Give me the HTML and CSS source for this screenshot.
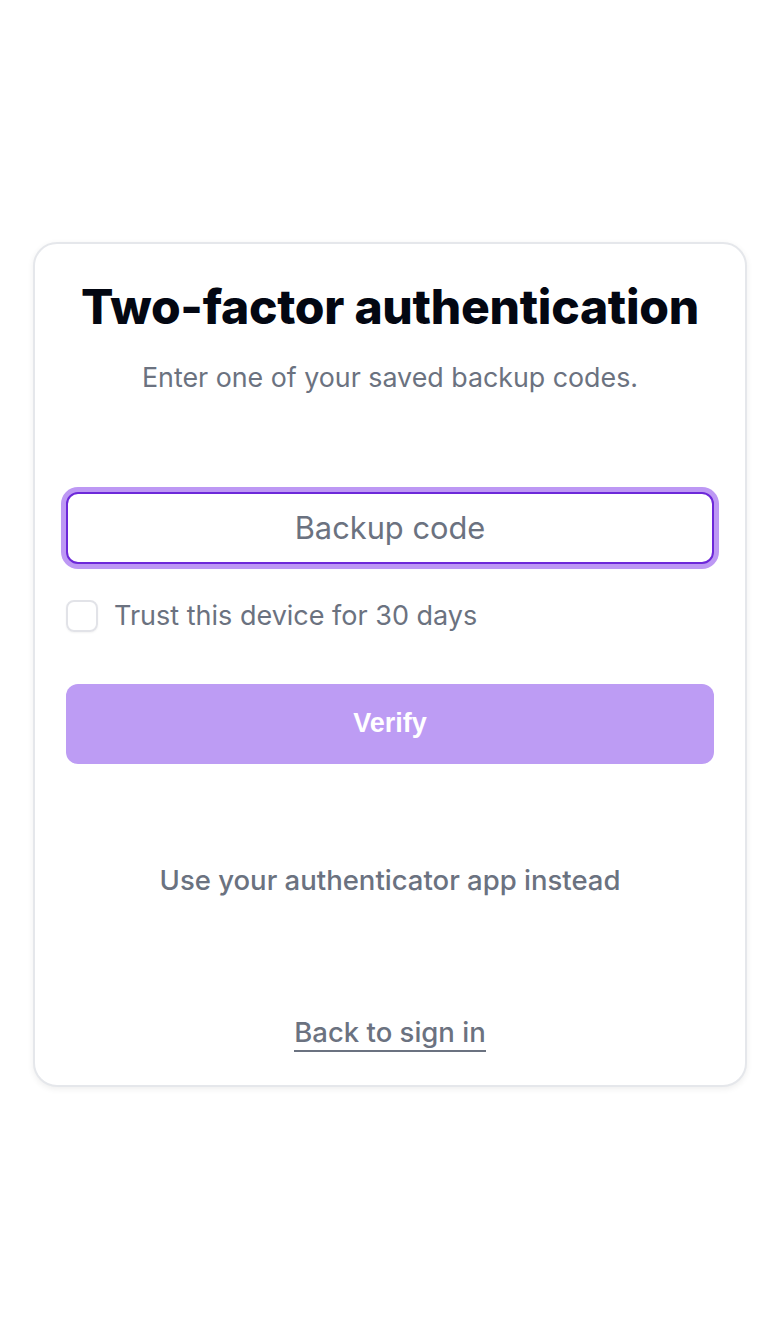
FILE: index.html
```html
<!DOCTYPE html>
<html lang="en">
<head>
<meta charset="utf-8">
<title>Two-factor authentication</title>
<link rel="stylesheet" href="styles.css">
</head>
<body>
<main class="page">
  <section class="card">
    <h1 class="title">Two-factor authentication</h1>
    <p class="subtitle">Enter one of your saved backup codes.</p>
    <form class="form">
      <input class="code-input" type="text" placeholder="Backup code">
      <label class="trust">
        <span class="checkbox"></span>
        <span class="trust-text">Trust this device for 30 days</span>
      </label>
      <button class="verify" type="button">Verify</button>
    </form>
    <p class="alt">Use your authenticator app instead</p>
    <div class="back-wrap"><a class="back" href="#">Back to sign in</a></div>
  </section>
</main>
</body>
</html>
```

FILE: styles.css
```css
* { box-sizing: border-box; }
html, body { margin: 0; padding: 0; background: #ffffff; }
body { font-family: Inter, "Noto Sans", sans-serif; color: #030712; }

.page {
  min-height: 1328px;
  display: flex;
  align-items: center;
  justify-content: center;
  padding: 0 33px;
}

.card {
  width: 714px;
  border: 2px solid #e5e7eb;
  border-radius: 24px;
  box-shadow: 0 2px 6px rgba(0, 0, 0, 0.07);
  padding: 31px;
  display: flex;
  flex-direction: column;
  align-items: stretch;
  background: #fff;
}

.title {
  margin: 0;
  font-size: 48px;
  line-height: 64px;
  font-weight: 800;
  letter-spacing: -0.28px;
  text-align: center;
  color: #030712;
}

.subtitle {
  margin: 20px 0 0;
  font-size: 26.8px;
  line-height: 36px;
  color: #6b7280;
  text-align: center;
}

.form {
  margin-top: 97px;
  display: flex;
  flex-direction: column;
}

.code-input {
  height: 72px;
  width: 100%;
  border: 2px solid #6d28d9;
  border-radius: 12px;
  box-shadow: 0 0 0 5px #bd98f4;
  outline: none;
  font-family: Inter, sans-serif;
  font-size: 30.8px;
  text-align: center;
  color: #111827;
  background: #fff;
}
.code-input::placeholder { color: #6b7280; }

.trust {
  margin-top: 32px;
  display: flex;
  align-items: center;
  gap: 16px;
  height: 40px;
}
.checkbox {
  width: 32px;
  height: 32px;
  border: 2px solid #e2e3e8;
  border-radius: 8px;
  box-shadow: 0 1px 2px rgba(0, 0, 0, 0.05);
  flex: none;
}
.trust-text {
  font-size: 27px;
  line-height: 40px;
  color: #6b7280;
}

.verify {
  margin-top: 48px;
  height: 80px;
  border: none;
  border-radius: 12px;
  background: #bd9cf4;
  color: #ffffff;
  font-family: "Liberation Sans", Arial, sans-serif;
  font-size: 27px;
  font-weight: 700;
}

.alt {
  margin: 96px 0 0;
  text-align: center;
  font-size: 27.5px;
  line-height: 40px;
  font-weight: 500;
  color: #6b7280;
}

.back-wrap {
  margin-top: 114px;
  text-align: center;
  line-height: 40px;
  height: 40px;
}
.back {
  display: inline-block;
  font-size: 27.5px;
  font-weight: 500;
  line-height: 36px;
  color: #6b7280;
  text-decoration: none;
  border-bottom: 2px solid #6b7280;
}
```
